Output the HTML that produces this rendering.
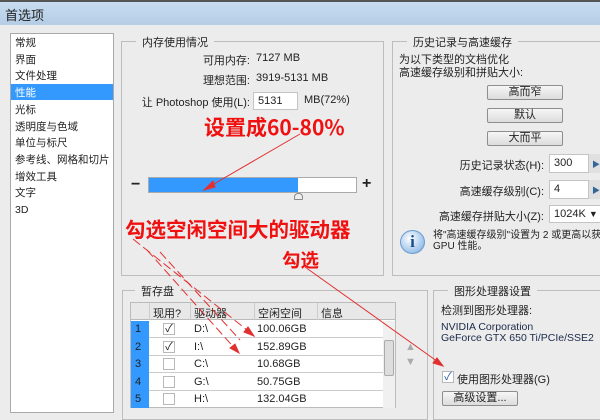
<!DOCTYPE html>
<html><head><meta charset="utf-8"><style>
*{margin:0;padding:0;box-sizing:border-box}
body{width:600px;height:407px;overflow:hidden;background:#ececec;font-family:"Liberation Sans","Noto Sans CJK SC",sans-serif;font-size:11px;color:#222;position:relative}
.a{position:absolute;white-space:nowrap}
.r{position:absolute;white-space:nowrap;text-align:right}
.title{left:0;top:0;width:600px;height:25px;background:linear-gradient(#c8dcef,#b4cde6);border-top:2px solid #555}
.grp{position:absolute;border:1px solid #bdbdbd}
.leg{position:absolute;background:#ececec;padding:0 6px;top:-8px;font-size:11px}
.inp{position:absolute;background:#fff;border:1px solid #c4c4c4;padding:2px 4px}
.btn{position:absolute;border:1px solid #8e8e8e;border-radius:2px;background:linear-gradient(#f6f6f6,#dcdcdc);text-align:center;line-height:13px}
.red{position:absolute;color:#f01010;font-weight:bold;white-space:nowrap;font-family:"WenQuanYi Zen Hei","Noto Sans CJK SC",sans-serif}
.cb{position:absolute;width:12px;height:12px;border:1px solid #b8b8b8;background:#fff;font-size:11px;line-height:10px;text-align:center}
</style></head><body>
<div class="a title"></div>
<div class="a" style="left:5px;top:5px;font-size:13px">首选项</div>

<div class="a" style="left:10px;top:33px;width:104px;height:380px;background:#fff;border:1px solid #a9a9a9"></div>
<div class="a" style="left:11px;top:84px;width:102px;height:16px;background:#3399ff"></div>
<div class="a" style="left:15px;top:35px;line-height:16.7px;font-size:10.5px">常规<br>界面<br>文件处理<br><span style="color:#fff">性能</span><br>光标<br>透明度与色域<br>单位与标尺<br>参考线、网格和切片<br>增效工具<br>文字<br>3D</div>

<div class="grp" style="left:121px;top:41px;width:263px;height:235px"><div class="leg" style="left:14px">内存使用情况</div></div>
<div class="r" style="left:150px;width:100px;top:52px">可用内存:</div><div class="a" style="left:256px;top:52px">7127 MB</div>
<div class="r" style="left:150px;width:100px;top:72px">理想范围:</div><div class="a" style="left:256px;top:72px">3919-5131 MB</div>
<div class="r" style="left:130px;width:120px;top:94px">让 Photoshop 使用(L):</div>
<div class="inp" style="left:253px;top:92px;width:45px;height:18px">5131</div>
<div class="a" style="left:304px;top:94px">MB(72%)</div>
<div class="red" style="left:204px;top:112px;font-size:21px">设置成60-80%</div>
<div class="a" style="left:131px;top:176px;font-size:16px;font-weight:bold">−</div>
<div class="a" style="left:148px;top:177px;width:209px;height:16px;border:1px solid #aaa;background:#fff"></div>
<div class="a" style="left:149px;top:178px;width:149px;height:14px;background:#3399ff"></div>
<div class="a" style="left:294px;top:193px;width:9px;height:7px;border:1px solid #888;border-radius:4px 4px 1px 1px;background:#eee"></div>
<div class="a" style="left:362px;top:175px;font-size:16px;font-weight:bold">+</div>

<div class="grp" style="left:392px;top:41px;width:215px;height:235px"><div class="leg" style="left:14px">历史记录与高速缓存</div></div>
<div class="a" style="left:399px;top:54px;line-height:12.5px">为以下类型的文档优化<br>高速缓存级别和拼贴大小:</div>
<div class="btn" style="left:487px;top:85px;width:76px;height:15px">高而窄</div>
<div class="btn" style="left:487px;top:108px;width:76px;height:15px">默认</div>
<div class="btn" style="left:487px;top:131px;width:76px;height:15px">大而平</div>
<div class="r" style="left:420px;width:124px;top:157px">历史记录状态(H):</div>
<div class="inp" style="left:549px;top:154px;width:40px;height:19px">300</div>
<div class="a" style="left:589px;top:154px;width:12px;height:19px;background:#e0e0e0;color:#369;font-size:8px;padding:5px 3px">▶</div>
<div class="r" style="left:420px;width:124px;top:183px">高速缓存级别(C):</div>
<div class="inp" style="left:549px;top:180px;width:40px;height:19px">4</div>
<div class="a" style="left:589px;top:180px;width:12px;height:19px;background:#e0e0e0;color:#369;font-size:8px;padding:5px 3px">▶</div>
<div class="r" style="left:400px;width:144px;top:208px">高速缓存拼贴大小(Z):</div>
<div class="inp" style="left:549px;top:205px;width:55px;height:18px">1024K <span style="font-size:9px">▼</span></div>
<div class="a" style="left:400px;top:230px;width:25px;height:24px;border-radius:50%;background:radial-gradient(circle at 40% 35%,#fff,#9cc3ea 70%,#5a8fc8);border:1px solid #6b9bd0;color:#1a4c8c;font-weight:bold;font-family:'Liberation Serif',serif;font-size:17px;text-align:center;line-height:22px">i</div>
<div class="a" style="left:433px;top:230px;line-height:11px;font-size:10px">将"高速缓存级别"设置为 2 或更高以获<br>GPU 性能。</div>

<div class="grp" style="left:122px;top:290px;width:306px;height:130px"><div class="leg" style="left:12px">暂存盘</div></div>
<div class="a" style="left:130px;top:302px;width:266px;height:106px;border:1px solid #bbb;background:#fff"></div>
<div class="a" style="left:131px;top:303px;width:264px;height:17px;background:#e8e8e8;border-bottom:1px solid #bbb"></div>
<div class="a" style="left:149px;top:303px;width:1px;height:17px;background:#ccc"></div>
<div class="a" style="left:190px;top:303px;width:1px;height:17px;background:#ccc"></div>
<div class="a" style="left:254px;top:303px;width:1px;height:17px;background:#ccc"></div>
<div class="a" style="left:317px;top:303px;width:1px;height:17px;background:#ccc"></div>
<div class="a" style="left:153px;top:305px">现用?</div><div class="a" style="left:194px;top:305px">驱动器</div><div class="a" style="left:258px;top:305px">空闲空间</div><div class="a" style="left:321px;top:305px">信息</div>
<div class="a" style="left:131px;top:321px;width:18px;height:87px;background:#3399ff"></div>
<div class="a" style="left:135px;top:321px;line-height:17.5px;font-size:11px">1<br>2<br>3<br>4<br>5</div>
<div class="a" style="left:149px;top:337px;width:234px;height:1px;background:#ccc"></div>
<div class="a" style="left:149px;top:355px;width:234px;height:1px;background:#ccc"></div>
<div class="a" style="left:149px;top:372px;width:234px;height:1px;background:#ccc"></div>
<div class="a" style="left:149px;top:390px;width:234px;height:1px;background:#ccc"></div>
<div class="cb" style="left:163px;top:323px">✓</div><div class="cb" style="left:163px;top:341px">✓</div><div class="cb" style="left:163px;top:358px"></div><div class="cb" style="left:163px;top:376px"></div><div class="cb" style="left:163px;top:393px"></div>
<div class="a" style="left:194px;top:321px;line-height:17.5px;font-size:11px">D:\<br>I:\<br>C:\<br>G:\<br>H:\</div>
<div class="a" style="left:257px;top:321px;line-height:17.5px;font-size:11px">100.06GB<br>152.89GB<br>10.68GB<br>50.75GB<br>132.04GB</div>
<div class="a" style="left:383px;top:321px;width:12px;height:87px;background:#f0f0f0"></div>
<div class="a" style="left:384px;top:340px;width:10px;height:36px;background:#ddd;border:1px solid #aaa;border-radius:2px"></div>
<div class="a" style="left:405px;top:340px;color:#aaa;font-size:11px;line-height:15px">▲<br>▼</div>

<div class="grp" style="left:433px;top:290px;width:175px;height:130px"><div class="leg" style="left:14px">图形处理器设置</div></div>
<div class="a" style="left:441px;top:302px">检测到图形处理器:</div>
<div class="a" style="left:441px;top:322px;font-size:10.5px;line-height:11px;color:#1b2a4a">NVIDIA Corporation<br>GeForce GTX 650 Ti/PCIe/SSE2</div>
<div class="cb" style="left:442px;top:371px;color:#2a5aa8">✓</div>
<div class="a" style="left:457px;top:371px">使用图形处理器(G)</div>
<div class="btn" style="left:442px;top:391px;width:76px;height:15px">高级设置...</div>

<div class="red" style="left:125px;top:213px;font-size:20.5px">勾选空闲空间大的驱动器</div>
<div class="red" style="left:282px;top:247px;font-size:18.5px">勾选</div>
<svg class="a" style="left:0;top:0" width="600" height="407">
<g stroke="#e23030" stroke-width="1" fill="#e23030">
<line x1="300" y1="134" x2="207" y2="188"/><polygon points="204,190 213,181 215,187"/>
<line x1="133" y1="239" x2="252" y2="334" stroke-dasharray="9,4"/><polygon points="254,336 244,332 248,327"/>
<line x1="147" y1="250" x2="237" y2="351" stroke-dasharray="9,4"/><polygon points="239,353 230,348 235,344"/>
<line x1="160" y1="252" x2="240" y2="340" stroke-dasharray="9,4" fill="none"/>
<line x1="305" y1="267" x2="441" y2="364"/><polygon points="443,366 433,363 437,358"/>
</g></svg>
</body></html>
